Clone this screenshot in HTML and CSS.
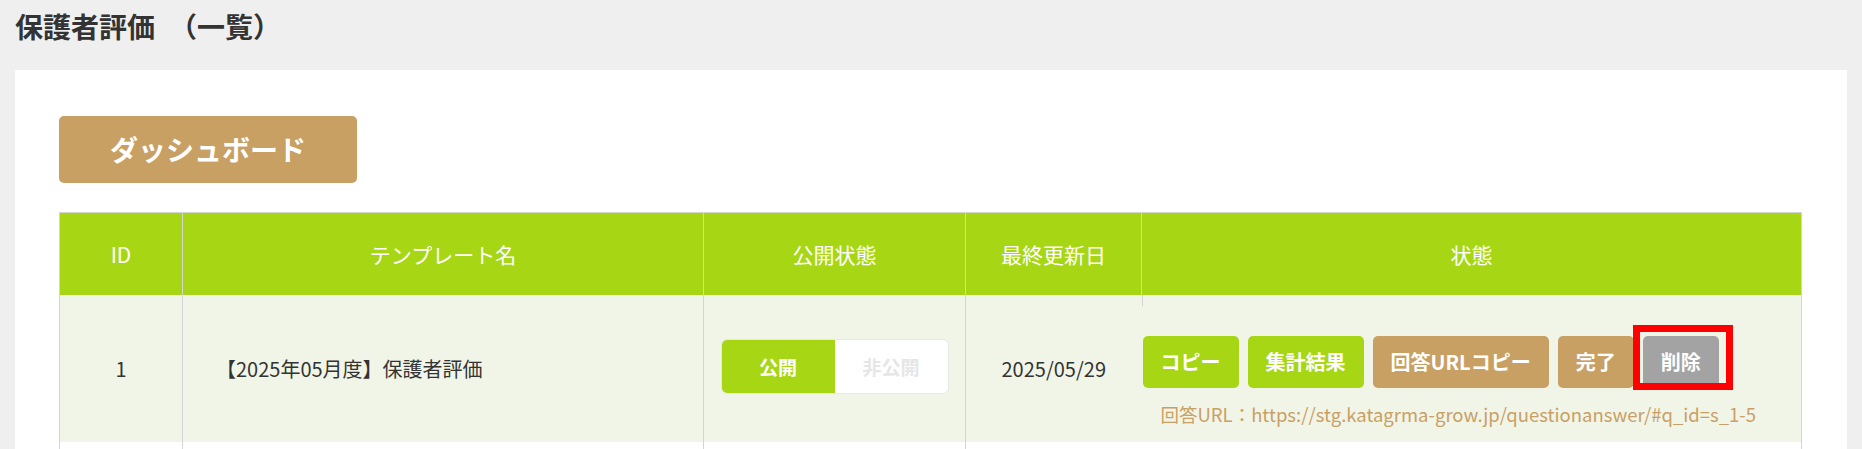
FILE: index.html
```html
<!DOCTYPE html>
<html lang="ja">
<head>
    <meta charset="UTF-8">
    <meta name="viewport" content="width=device-width, initial-scale=1.0">
    <title>保護者評価（一覧）</title>
    <link rel="stylesheet" href="styles.css">
</head>

<body>
    <h1 class="page-title">保護者評価　（一覧）</h1>

    <div class="panel">
        <a class="dash-button" href="#">ダッシュボード</a>

        <table class="list-table">
            <thead>
                <tr>
                    <th class="col-id">ID</th>
                    <th class="col-name">テンプレート名</th>
                    <th class="col-public">公開状態</th>
                    <th class="col-date">最終更新日</th>
                    <th class="col-state">状態</th>
                </tr>
            </thead>
            <tbody>
                <tr class="row-odd">
                    <td class="cell-id">1</td>
                    <td class="cell-name">【2025年05月度】保護者評価</td>
                    <td class="cell-public">
                        <div class="toggle">
                            <span class="toggle-on">公開</span>
                            <span class="toggle-off">非公開</span>
                        </div>
                    </td>
                    <td class="cell-date">2025/05/29</td>
                    <td class="cell-state">
                        <div class="actions">
                            <a class="btn btn-green" href="#">コピー</a>
                            <a class="btn btn-green" href="#">集計結果</a>
                            <a class="btn btn-tan" href="#">回答URLコピー</a>
                            <a class="btn btn-tan" href="#">完了</a>
                            <span class="marked">
                                <a class="btn btn-gray" href="#">削除</a>
                            </span>
                        </div>
                        <p class="answer-url">回答URL：https://stg.katagrma-grow.jp/questionanswer/#q_id=s_1-5</p>
                    </td>
                </tr>
                <tr class="row-even">
                    <td class="cell-id"></td>
                    <td class="cell-name"></td>
                    <td class="cell-public"></td>
                    <td class="cell-date"></td>
                    <td class="cell-state"></td>
                </tr>
            </tbody>
        </table>
    </div>
</body>
</html>
```

FILE: styles.css
```css
    body {
        margin: 0;
        padding: 0 15px;
        background-color: #efefef;
        font-family: "Noto Sans CJK JP", "Noto Sans", sans-serif;
        color: #333333;
        overflow: hidden;
    }

    .page-title {
        margin: 0 0 24px 0;
        padding-top: 6px;
        font-size: 28px;
        line-height: 40px;
        font-weight: bold;
        color: #333333;
    }

    .panel {
        background-color: white;
        padding: 46px 45px 0 44px;
        height: 379px;
    }

    .dash-button {
        display: block;
        width: 298px;
        height: 67px;
        line-height: 67px;
        text-align: center;
        background-color: #c9a063;
        color: white;
        font-size: 28px;
        font-weight: bold;
        text-decoration: none;
        border-radius: 5px;
        margin-bottom: 29px;
    }

    .list-table {
        width: 100%;
        border-collapse: collapse;
        table-layout: fixed;
        border: 1px solid #d4d4d4;
    }

    .list-table th {
        height: 82px;
        padding: 0;
        background-color: #a7d714;
        color: white;
        font-size: 21px;
        font-weight: normal;
        border: 1px solid #d4d4d4;
        border-bottom: none;
    }

    .col-id { width: 122px; }
    .col-name { width: 520px; }
    .col-public { width: 261px; }
    .col-date { width: 175px; }

    .list-table td {
        box-sizing: border-box;
        height: 147px;
        padding: 0;
        border-left: 1px solid #d4d4d4;
        border-right: 1px solid #d4d4d4;
        font-size: 20px;
        vertical-align: middle;
    }

    .row-odd td {
        background-color: #f1f5e8;
    }

    .row-even td {
        background-color: white;
    }

    .cell-id {
        text-align: center;
    }

    .list-table td.cell-name {
        padding-left: 33px;
    }

    .cell-public,
    .cell-date {
        text-align: center;
    }

    .toggle {
        display: inline-flex;
        border: 1px solid #e8e8e8;
        border-radius: 6px;
        overflow: hidden;
        background-color: white;
        margin-top: -4px;
    }

    .toggle span {
        width: 113px;
        height: 53px;
        line-height: 53px;
        font-size: 19px;
        font-weight: bold;
    }

    .toggle-on {
        background-color: #a7d714;
        color: white;
    }

    .toggle-off {
        color: #e6e6e6;
    }

    .list-table td.cell-state {
        border-left: hidden;
        vertical-align: top;
        padding: 41px 0 0 1px;
        background-image: linear-gradient(#d4d4d4, #d4d4d4);
        background-size: 1px 11px;
        background-repeat: no-repeat;
        background-position: left top;
    }

    .row-even td.cell-state {
        background-image: none;
    }

    .actions {
        display: flex;
        gap: 9px;
    }

    .btn {
        display: block;
        height: 52px;
        line-height: 52px;
        padding: 0 18px;
        font-size: 20px;
        font-weight: bold;
        color: white;
        text-decoration: none;
        border-radius: 5px;
    }

    .btn-green { background-color: #a7d714; }
    .btn-tan { background-color: #c9a063; }
    .btn-gray { background-color: #a3a3a3; }

    .marked {
        position: relative;
        display: block;
    }

    /* red highlight frame drawn over the delete button */
    .marked::after {
        content: "";
        position: absolute;
        top: -11px;
        left: -10px;
        right: -14px;
        bottom: -2px;
        border: 7px solid #ff0000;
    }

    .answer-url {
        margin: 12px 0 0 0;
        padding-left: 18px;
        font-size: 18.5px;
        line-height: 28px;
        color: #c9a063;
    }
```
